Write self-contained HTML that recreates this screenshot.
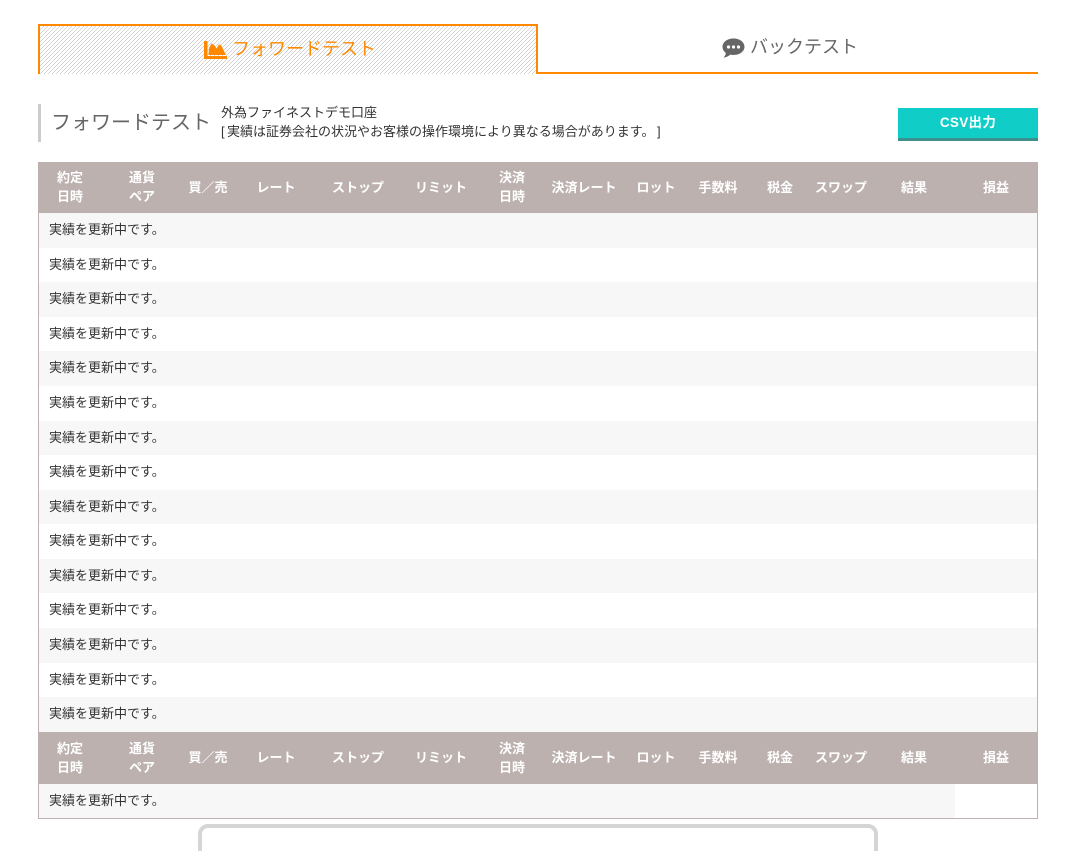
<!DOCTYPE html>
<html lang="ja">
<head>
<meta charset="utf-8">
<title>フォワードテスト</title>
<style>
html,body{margin:0;padding:0;background:#fff;width:1086px;height:851px;overflow:hidden;}
body{position:relative;font-family:"Liberation Sans","Noto Sans CJK JP",sans-serif;color:#333;text-spacing-trim:space-all;}
.a{position:absolute;}
.t{position:absolute;white-space:nowrap;}
.tab1{left:38px;top:24px;width:496px;height:48px;border:2px solid #ff8800;border-bottom:none;}
.line{left:536px;top:72px;width:502px;height:2px;background:#ff8800;}
.h{position:absolute;left:38px;width:1000px;background:#bcb1af;}
.h span{position:absolute;transform:translateX(-50%);color:#fff;font-size:13px;font-weight:bold;line-height:19px;text-align:center;white-space:nowrap;}
.r{position:absolute;left:39px;width:998px;font-size:13px;color:#333;text-indent:10px;line-height:33px;}
.o{background:#f7f7f7;}
</style>
</head>
<body>
<svg class="a" style="left:40px;top:26px" width="496" height="48" shape-rendering="crispEdges"><defs><pattern id="hatch" width="4" height="4" patternUnits="userSpaceOnUse"><rect x="3" y="0" width="1" height="1" fill="#d2d2d2"/><rect x="2" y="1" width="1" height="1" fill="#d2d2d2"/><rect x="1" y="2" width="1" height="1" fill="#d2d2d2"/><rect x="0" y="3" width="1" height="1" fill="#d2d2d2"/></pattern></defs><rect width="496" height="48" fill="url(#hatch)"/></svg>
<div class="a tab1"></div>
<div class="a line"></div>
<svg class="a" style="left:204px;top:40px" width="23" height="19" viewBox="0 0 23 19"><path fill="#ff8800" d="M0 1h3.500v15H23v3H0z"/><path fill="#ff8800" d="M4.500 15L5 8L7.500 3.500L10 5L12.500 8.500L15 4.500L17 5L19 9L22 15z"/></svg>
<div class="t" style="left:232px;top:35px;font-size:18px;line-height:28px;color:#ff8800;">フォワードテスト</div>
<svg class="a" style="left:722px;top:38px" width="23" height="20" viewBox="0 0 23 20"><path fill="#666" d="M11.500 0.500C17.800 0.500 22.500 4.200 22.500 8.800C22.500 13.400 17.800 17 11.500 17C10.300 17 9.200 16.900 8.200 16.600C6.500 18.200 4.200 19.300 1.500 19.500C2.800 18.300 3.600 16.800 3.900 15C1.800 13.500 0.500 11.300 0.500 8.800C0.500 4.200 5.200 0.500 11.500 0.500Z"/><circle cx="6.500" cy="9" r="1.600" fill="#fff"/><circle cx="11.500" cy="9" r="1.600" fill="#fff"/><circle cx="16.500" cy="9" r="1.600" fill="#fff"/></svg>
<div class="t" style="left:750px;top:33px;font-size:18px;line-height:28px;color:#666;">バックテスト</div>

<div class="a" style="left:38px;top:104px;width:3px;height:38px;background:#ccc;"></div>
<div class="t" style="left:51px;top:107px;font-size:20px;line-height:32px;color:#666;">フォワードテスト</div>
<div class="t" style="left:221px;top:103px;font-size:13px;line-height:19px;color:#333;">外為ファイネストデモ口座</div>
<div class="t" style="left:221px;top:122px;font-size:13px;line-height:19px;color:#333;">[</div>
<div class="t" style="left:227px;top:122px;font-size:13px;line-height:19px;color:#333;">実績は証券会社の状況やお客様の操作環境により異なる場合があります。</div>
<div class="t" style="left:657px;top:122px;font-size:13px;line-height:19px;color:#333;">]</div>
<div class="a" style="left:898px;top:108px;width:140px;height:30px;background:#11cdc8;border-bottom:3px solid #3f8f8c;color:#fff;font-size:13.500px;font-weight:bold;line-height:29px;text-align:center;letter-spacing:0.300px;">CSV出力</div>

<div class="a" style="left:38px;top:162px;width:998px;height:656px;border:1px solid #bcb1af;border-top:none;"></div>

<div class="h" style="top:162px;height:51px;">
<span style="left:32px;top:6px;">約定<br>日時</span>
<span style="left:104px;top:6px;">通貨<br>ペア</span>
<span style="left:170px;top:16px;">買／売</span>
<span style="left:238px;top:16px;">レート</span>
<span style="left:320px;top:16px;">ストップ</span>
<span style="left:403px;top:16px;">リミット</span>
<span style="left:474px;top:6px;">決済<br>日時</span>
<span style="left:546px;top:16px;">決済レート</span>
<span style="left:618px;top:16px;">ロット</span>
<span style="left:680px;top:16px;">手数料</span>
<span style="left:742px;top:16px;">税金</span>
<span style="left:803px;top:16px;">スワップ</span>
<span style="left:876px;top:16px;">結果</span>
<span style="left:958px;top:16px;">損益</span>
</div>

<div class="r o" style="top:213px;height:35px;">実績を更新中です。</div>
<div class="r" style="top:248px;height:34px;">実績を更新中です。</div>
<div class="r o" style="top:282px;height:35px;">実績を更新中です。</div>
<div class="r" style="top:317px;height:34px;">実績を更新中です。</div>
<div class="r o" style="top:351px;height:35px;">実績を更新中です。</div>
<div class="r" style="top:386px;height:35px;">実績を更新中です。</div>
<div class="r o" style="top:421px;height:34px;">実績を更新中です。</div>
<div class="r" style="top:455px;height:35px;">実績を更新中です。</div>
<div class="r o" style="top:490px;height:34px;">実績を更新中です。</div>
<div class="r" style="top:524px;height:35px;">実績を更新中です。</div>
<div class="r o" style="top:559px;height:34px;">実績を更新中です。</div>
<div class="r" style="top:593px;height:35px;">実績を更新中です。</div>
<div class="r o" style="top:628px;height:35px;">実績を更新中です。</div>
<div class="r" style="top:663px;height:34px;">実績を更新中です。</div>
<div class="r o" style="top:697px;height:35px;">実績を更新中です。</div>

<div class="h" style="top:732px;height:52px;">
<span style="left:32px;top:7px;">約定<br>日時</span>
<span style="left:104px;top:7px;">通貨<br>ペア</span>
<span style="left:170px;top:16px;">買／売</span>
<span style="left:238px;top:16px;">レート</span>
<span style="left:320px;top:16px;">ストップ</span>
<span style="left:403px;top:16px;">リミット</span>
<span style="left:474px;top:7px;">決済<br>日時</span>
<span style="left:546px;top:16px;">決済レート</span>
<span style="left:618px;top:16px;">ロット</span>
<span style="left:680px;top:16px;">手数料</span>
<span style="left:742px;top:16px;">税金</span>
<span style="left:803px;top:16px;">スワップ</span>
<span style="left:876px;top:16px;">結果</span>
<span style="left:958px;top:16px;">損益</span>
</div>

<div class="r o" style="top:784px;width:916px;height:34px;">実績を更新中です。</div>

<div class="a" style="left:198px;top:824px;width:680px;height:27px;overflow:hidden;"><div style="width:672px;height:60px;border:4px solid #d5d5d5;border-radius:10px;"></div></div>
</body>
</html>
